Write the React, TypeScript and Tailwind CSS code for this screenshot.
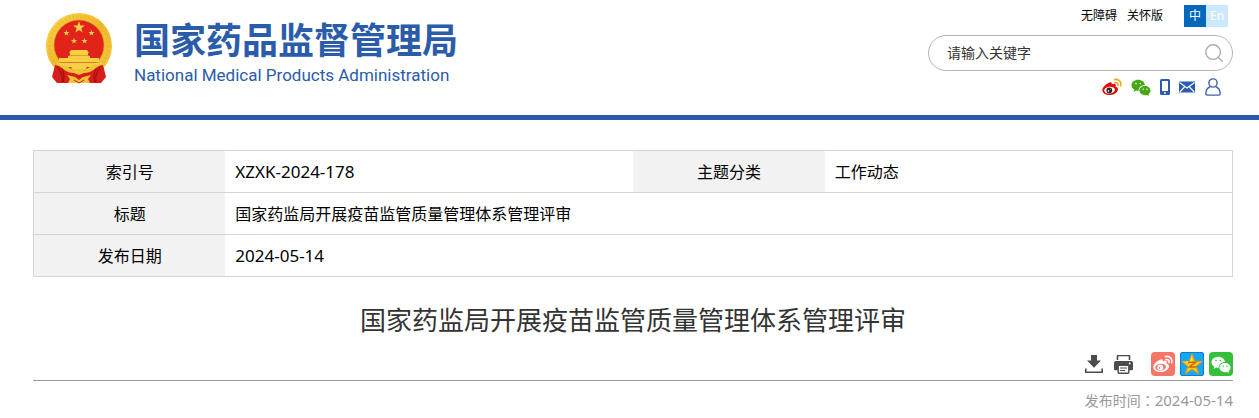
import React, { useState } from "react";
import { Search } from "lucide-react";

interface IconProps {
  className?: string;
}

interface WeiboProps extends IconProps {
  body: string;
  eye: string;
  pupil: string;
  wave: string;
}

const STAR = "M0 -10L2.4 -3.2L9.5 -3.1L3.8 1.2L5.9 8.1L0 4L-5.9 8.1L-3.8 1.2L-9.5 -3.1L-2.4 -3.2Z";

const Emblem: React.FC<IconProps> = ({ className }) => (
  <svg viewBox="0 0 68 72" className={className} aria-hidden="true">
    <defs>
      <linearGradient id="gold" x1="0" y1="0" x2="1" y2="1">
        <stop offset="0" stopColor="#fbd54a" />
        <stop offset="0.5" stopColor="#f0b92c" />
        <stop offset="1" stopColor="#f6c93c" />
      </linearGradient>
    </defs>
    <circle cx="34" cy="34" r="33" fill="url(#gold)" />
    <circle cx="34" cy="34" r="29.5" fill="none" stroke="#e0a01f" strokeWidth="3" strokeDasharray="2 2" opacity="0.25" />
    <circle cx="34" cy="33" r="25" fill="#e1231a" stroke="#d99a1c" strokeWidth="0.6" />
    <g fill="#f6cf45">
      <path d={STAR} transform="translate(34 15.5) scale(.62)" />
      <path d={STAR} transform="translate(21.5 21) scale(.32)" />
      <path d={STAR} transform="translate(46.5 21) scale(.32)" />
      <path d={STAR} transform="translate(29 29) scale(.32)" />
      <path d={STAR} transform="translate(39.5 29) scale(.32)" />
      <path d="M26 38h16l2 3h-1v3h2v2H23v-2h2v-3h-1z" />
      <path d="M14 46h40v4H14z" />
      <path d="M11 51h46l-4 4H15z" />
    </g>
    <path d="M24 43.500h20M14 50.500h40" stroke="#d9921c" strokeWidth="0.8" />
    <path d="M10 53l13 3c3 3 7 3 11 1 4 2 8 2 11-1l13-3 3 12-5 6H12l-5-6z" fill="#d81e18" />
    <path d="M12 54c4 5 6 11 5 16M56 54c-4 5-6 11-5 16M17 56c2 5 3 9 1 14M51 56c-2 5-3 9-1 14" fill="none" stroke="#9f0f10" strokeWidth="1.1" />
    <path d="M11 52c9 0 13 4 18 7l5-4 5 4c5-3 9-7 18-7-7 4-10 9-18 9l-5 2-5-2c-8 0-11-5-18-9z" fill="#f3c238" />
    <path d="M26 55c4-4 12-4 16 0l-3 4c-3-3-7-3-10 0z" fill="#f7d04a" />
    <path d="M22 63l8 2 4 3 4-3 8-2-3 4 2 4H23l2-4z" fill="#f3c238" />
    <path d="M29 68l5 3 5-3" fill="none" stroke="#d81e18" />
  </svg>
);

const WeiboIcon: React.FC<WeiboProps> = ({ className, body, eye, pupil, wave }) => (
  <svg viewBox="0 0 20 18" className={className} aria-hidden="true">
    <path
      d="M7.600 4.400c1.600-.6 2.600.1 2.200 1.900 2-.8 4.200-.8 4 1.300 0 .5-.5.9.1 1.100 1.700.6 2.400 1.700 2 3.300-.8 3-4.500 5-8.200 5C3.700 17 .3 15 .3 12c0-2.800 4.300-6.800 7.300-7.600z"
      fill={body}
    />
    <ellipse cx="7.6" cy="12.1" rx="5.4" ry="3.4" transform="rotate(-8 7.6 12.1)" fill={eye} />
    <circle cx="7.3" cy="12.3" r="2.9" fill={pupil} />
    <circle cx="6.5" cy="12.9" r="0.8" fill={eye} />
    <circle cx="8.3" cy="11.7" r="0.4" fill={eye} />
    <path d="M12.600 1.600c4-.9 7.200 2.300 6 6.200M13 4.600c2-.5 3.500 1 3 2.900" fill="none" stroke={wave} strokeWidth="1.6" strokeLinecap="round" />
  </svg>
);

const WechatIcon: React.FC<IconProps & { fill: string; dot: string }> = ({ className, fill, dot }) => (
  <svg viewBox="0 0 20 17" className={className} aria-hidden="true">
    <path d="M7.200.8c3.700 0 6.600 2.400 6.700 5.300-3.500 0-6.300 2.300-6.200 5.600-.8.1-1.700 0-2.600-.2l-2.500 1.400.7-2.200C1.600 9.600.5 8 .5 6.200.5 3.200 3.500.8 7.200.8z" fill={fill} />
    <path d="M14 6.900c3.100 0 5.600 2.100 5.600 4.700 0 1.400-.8 2.700-2.100 3.600l.5 1.700-2-1c-.7.200-1.300.3-2 .3-3.100 0-5.600-2-5.600-4.600S10.900 6.900 14 6.900z" fill={fill} />
    <g fill={dot}>
      <circle cx="5" cy="4.6" r="0.8" />
      <circle cx="9.3" cy="4.6" r="0.8" />
      <circle cx="12.2" cy="10.3" r="0.7" />
      <circle cx="15.9" cy="10.3" r="0.7" />
    </g>
  </svg>
);

const PhoneIcon: React.FC<IconProps> = ({ className }) => (
  <svg viewBox="0 0 10 16" className={className} aria-hidden="true">
    <rect width="10" height="16" rx="1.5" fill="#2b5cab" />
    <path d="M2 2h6v10H2z" fill="#fff" />
    <circle cx="5" cy="14" r="0.9" fill="#fff" />
  </svg>
);

const MailIcon: React.FC<IconProps> = ({ className }) => (
  <svg viewBox="0 0 16 12" className={className} aria-hidden="true">
    <rect y="0.5" width="16" height="11" fill="#2b5cab" />
    <path d="M.5 1.500L8 7l7.500-5.500M.8 11l4.700-5M15.200 11l-4.700-5" fill="none" stroke="#fff" strokeWidth="1.1" />
  </svg>
);

const UserIcon: React.FC<IconProps> = ({ className }) => (
  <svg viewBox="0 0 16 18" className={className} fill="none" stroke="#3f5fb0" strokeWidth="1.4" aria-hidden="true">
    <circle cx="8" cy="5" r="4.1" />
    <path d="M5.200 8.700C2.200 10.200.8 12.700.8 15.600c0 1 .5 1.500 1.400 1.500h11.600c.9 0 1.400-.5 1.400-1.500 0-2.900-1.400-5.400-4.400-6.900" />
  </svg>
);

const DownloadIcon: React.FC<IconProps> = ({ className }) => (
  <svg viewBox="0 0 18 18" className={className} aria-hidden="true">
    <path d="M6 0h6v5.500h4L9 12.800 2 5.500h4z" fill="#4d4d4d" />
    <path d="M.8 13.500v3.700h16.400v-3.700" fill="none" stroke="#4d4d4d" strokeWidth="1.6" />
  </svg>
);

const PrintIcon: React.FC<IconProps> = ({ className }) => (
  <svg viewBox="0 0 19 19" className={className} aria-hidden="true">
    <path d="M3.500 5V1.500c0-.6.4-1 1-1h10c.6 0 1 .4 1 1V5" fill="none" stroke="#4d4d4d" strokeWidth="1.6" />
    <path d="M2 6h15c1.200 0 2 .8 2 2v6c0 .8-.5 1.300-1.300 1.300H15V11H4v4.300H1.300C.5 15.300 0 14.800 0 14V8c0-1.200.8-2 2-2z" fill="#4d4d4d" />
    <path d="M4.200 11v6.500c0 .4.300.7.700.7h9.200c.4 0 .7-.3.700-.7V11" fill="#fff" stroke="#4d4d4d" strokeWidth="1.4" />
    <path d="M6 13h7M6 15.500h5" stroke="#4d4d4d" strokeWidth="1.2" />
    <circle cx="15.7" cy="8.5" r="0.9" fill="#fff" />
  </svg>
);

const QzoneIcon: React.FC<IconProps> = ({ className }) => (
  <svg viewBox="0 0 24 24" className={className} aria-hidden="true">
    <rect x="0.5" y="0.5" width="23" height="23" rx="1.5" fill="#12a8f6" stroke="#1678c8" />
    <path d={STAR} transform="translate(12 12.8) scale(1.12)" fill="#fcc718" stroke="#e58e12" strokeWidth="0.8" strokeLinejoin="round" />
    <path d="M12 3v8l-9-1 7-1z" fill="#ffe24d" />
    <path d="M8 10.200h7.500L9.500 15h7" fill="none" stroke="#c86b08" strokeWidth="1.5" />
  </svg>
);

const Header = () => {
  const [keyword, setKeyword] = useState("");

  return (
    <header className="flex items-start justify-between border-b-[5px] border-[#2a5caa] pr-[26px] pl-[45px] pb-[19px]">
      <a href="#" className="flex items-start gap-[21px] pt-3 text-[#2a5caa]">
        <Emblem className="h-[72px] w-[68px]" />
        <span className="flex flex-col pt-[7px]">
          <span className="text-[36px] leading-[44px] font-bold">国家药品监督管理局</span>
          <span className="font-[Roboto,sans-serif] text-[17px] leading-6">
            National Medical Products Administration
          </span>
        </span>
      </a>

      <div className="flex w-[305px] flex-col items-end pt-[5px]">
        <nav className="flex items-center gap-[10px] pr-[5px] text-[12px] leading-[22px]">
          <a href="#">无障碍</a>
          <a href="#">关怀版</a>
          <span className="flex pl-[11px] text-center text-white">
            <a href="#" className="h-[22px] w-[22px] bg-[#0069bb]">中</a>
            <a href="#" className="h-[22px] w-[22px] bg-[#cce8ff]">En</a>
          </span>
        </nav>

        <form
          onSubmit={(e) => e.preventDefault()}
          className="mt-2 flex h-9 w-full items-center rounded-full border border-[#b5b5b5] pr-[7px] pl-[18px]"
        >
          <input
            type="text"
            aria-label="请输入关键字"
            placeholder="请输入关键字"
            value={keyword}
            onChange={(e) => setKeyword(e.target.value)}
            className="min-w-0 flex-1 text-[14px] leading-5 text-[#333] outline-none placeholder:text-[#333]"
          />
          <button type="submit" aria-label="搜索">
            <Search size={22} strokeWidth={1.5} color="#aaa" />
          </button>
        </form>

        <div className="mt-[7px] flex items-center gap-[9px] pr-[11px]">
          <a href="#" aria-label="微博">
            <WeiboIcon className="h-[18px] w-5" body="#e00b0b" eye="#fff" pupil="#222" wave="#efa81a" />
          </a>
          <a href="#" aria-label="微信">
            <WechatIcon className="h-[17px] w-5" fill="#45a913" dot="#fff" />
          </a>
          <a href="#" aria-label="手机版">
            <PhoneIcon className="h-4 w-[10px]" />
          </a>
          <a href="#" aria-label="邮箱">
            <MailIcon className="h-3 w-4" />
          </a>
          <a href="#" aria-label="个人中心">
            <UserIcon className="h-[18px] w-[18px]" />
          </a>
        </div>
      </div>
    </header>
  );
};

const InfoTable = () => {
  const label = "bg-[#f2f2f2] text-center font-normal";
  const value = "px-[10px]";
  const row = "h-[42px] border border-[#d5d5d5]";

  return (
    <table className="w-full table-fixed border-collapse text-[16px] leading-6 text-black">
      <colgroup>
        <col className="w-[16%]" />
        <col className="w-[34%]" />
        <col className="w-[16%]" />
        <col className="w-[34%]" />
      </colgroup>
      <tbody>
        <tr className={row}>
          <th scope="row" className={label}>索引号</th>
          <td className={`${value} text-[17px]`}>XZXK-2024-178</td>
          <th scope="row" className={label}>主题分类</th>
          <td className={value}>工作动态</td>
        </tr>
        <tr className={row}>
          <th scope="row" className={label}>标题</th>
          <td colSpan={3} className={value}>国家药监局开展疫苗监管质量管理体系管理评审</td>
        </tr>
        <tr className={row}>
          <th scope="row" className={label}>发布日期</th>
          <td colSpan={3} className={`${value} text-[17px]`}>2024-05-14</td>
        </tr>
      </tbody>
    </table>
  );
};

export default function App() {
  return (
    <div className="bg-white font-['Noto_Sans','Noto_Sans_CJK_SC',sans-serif] text-black">
      <Header />
      <main className="pt-[30px] pr-[26px] pl-[33px]">
        <InfoTable />
        <h1 className="mt-[23px] text-center text-[26px] leading-10 text-[#333]">
          国家药监局开展疫苗监管质量管理体系管理评审
        </h1>
        <div className="mt-3 flex items-center justify-end border-b border-[#999] pb-1">
          <button type="button" aria-label="下载" className="mr-[11px]">
            <DownloadIcon className="h-[18px] w-[18px]" />
          </button>
          <button type="button" aria-label="打印" className="mr-[18px]">
            <PrintIcon className="h-[19px] w-[19px]" />
          </button>
          <div className="flex gap-[5px]">
            <a href="#" aria-label="分享到微博" className="flex h-6 w-6 items-center justify-center rounded-sm bg-[#f57567]">
              <WeiboIcon className="h-[18px] w-5" body="#fff" eye="#f57567" pupil="#fff" wave="#fff" />
            </a>
            <a href="#" aria-label="分享到QQ空间">
              <QzoneIcon className="h-6 w-6" />
            </a>
            <a href="#" aria-label="分享到微信" className="flex h-6 w-6 items-center justify-center rounded-sm bg-[#35bf3c]">
              <WechatIcon className="h-[17px] w-5" fill="#fff" dot="#35bf3c" />
            </a>
          </div>
        </div>
        <p className="pt-[7px] text-right font-['Noto_Sans','Noto_Sans_CJK_TC',sans-serif] text-[14px] leading-6 text-[#999]">
          发布时间：<time dateTime="2024-05-14" className="text-[15px]">2024-05-14</time>
        </p>
      </main>
    </div>
  );
}
